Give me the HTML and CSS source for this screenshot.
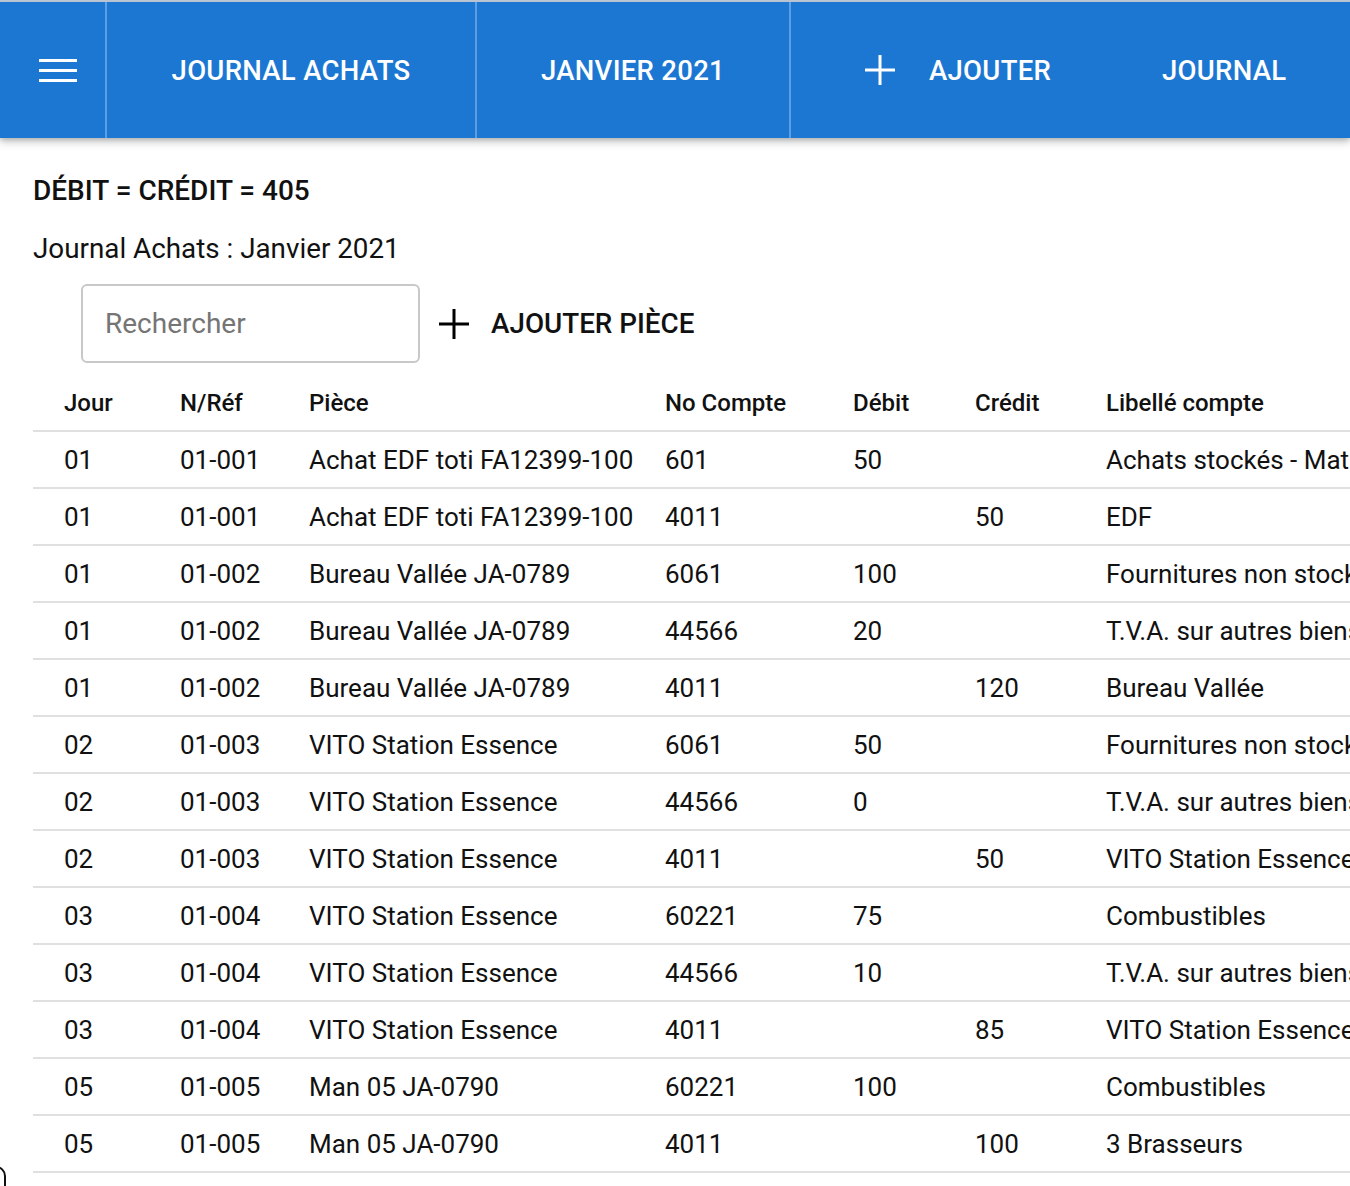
FILE: index.html
```html
<!DOCTYPE html>
<html lang="fr">
<head>
<meta charset="utf-8">
<title>Journal Achats</title>
<link rel="stylesheet" href="styles.css">
</head>
<body>
<header class="appbar">
  <div class="seg seg-menu">
    <svg class="menu-icon" width="38" height="25" viewBox="0 0 38 25"><rect x="0" y="1" width="38" height="3" fill="#fff"/><rect x="0" y="11" width="38" height="3" fill="#fff"/><rect x="0" y="21" width="38" height="3" fill="#fff"/></svg>
  </div>
  <div class="seg seg-journal">JOURNAL ACHATS</div>
  <div class="seg seg-month">JANVIER 2021</div>
  <div class="seg seg-add">
    <svg class="plus" width="30" height="30" viewBox="0 0 30 30"><rect x="0" y="13.5" width="30" height="3" fill="#fff"/><rect x="13.5" y="0" width="3" height="30" fill="#fff"/></svg>
    <span>AJOUTER</span>
  </div>
  <div class="seg seg-jour">JOURNAL</div>
</header>

<main class="content">
  <h1 class="total">DÉBIT = CRÉDIT = 405</h1>
  <p class="subtitle">Journal Achats : Janvier 2021</p>
  <div class="toolbar">
    <div class="search"><span class="placeholder">Rechercher</span></div>
    <div class="add-piece">
      <svg class="plus" width="30" height="30" viewBox="0 0 30 30"><rect x="0" y="13.5" width="30" height="3" fill="#000"/><rect x="13.5" y="0" width="3" height="30" fill="#000"/></svg>
      <span>AJOUTER PIÈCE</span>
    </div>
  </div>

  <table class="grid">
    <thead>
      <tr><th class="c1">Jour</th><th class="c2">N/Réf</th><th class="c3">Pièce</th><th class="c4">No Compte</th><th class="c5">Débit</th><th class="c6">Crédit</th><th class="c7">Libellé compte</th></tr>
    </thead>
    <tbody>
      <tr><td>01</td><td>01-001</td><td>Achat EDF toti FA12399-100</td><td>601</td><td>50</td><td></td><td>Achats stockés - Matières premières</td></tr>
      <tr><td>01</td><td>01-001</td><td>Achat EDF toti FA12399-100</td><td>4011</td><td></td><td>50</td><td>EDF</td></tr>
      <tr><td>01</td><td>01-002</td><td>Bureau Vallée JA-0789</td><td>6061</td><td>100</td><td></td><td>Fournitures non stockables</td></tr>
      <tr><td>01</td><td>01-002</td><td>Bureau Vallée JA-0789</td><td>44566</td><td>20</td><td></td><td>T.V.A. sur autres biens et services</td></tr>
      <tr><td>01</td><td>01-002</td><td>Bureau Vallée JA-0789</td><td>4011</td><td></td><td>120</td><td>Bureau Vallée</td></tr>
      <tr><td>02</td><td>01-003</td><td>VITO Station Essence</td><td>6061</td><td>50</td><td></td><td>Fournitures non stockables</td></tr>
      <tr><td>02</td><td>01-003</td><td>VITO Station Essence</td><td>44566</td><td>0</td><td></td><td>T.V.A. sur autres biens et services</td></tr>
      <tr><td>02</td><td>01-003</td><td>VITO Station Essence</td><td>4011</td><td></td><td>50</td><td>VITO Station Essence</td></tr>
      <tr><td>03</td><td>01-004</td><td>VITO Station Essence</td><td>60221</td><td>75</td><td></td><td>Combustibles</td></tr>
      <tr><td>03</td><td>01-004</td><td>VITO Station Essence</td><td>44566</td><td>10</td><td></td><td>T.V.A. sur autres biens et services</td></tr>
      <tr><td>03</td><td>01-004</td><td>VITO Station Essence</td><td>4011</td><td></td><td>85</td><td>VITO Station Essence</td></tr>
      <tr><td>05</td><td>01-005</td><td>Man 05 JA-0790</td><td>60221</td><td>100</td><td></td><td>Combustibles</td></tr>
      <tr><td>05</td><td>01-005</td><td>Man 05 JA-0790</td><td>4011</td><td></td><td>100</td><td>3 Brasseurs</td></tr>
    </tbody>
  </table>
</main>
<div class="corner"></div>
</body>
</html>
```

FILE: styles.css
```css
* { box-sizing: border-box; }
html, body { margin: 0; padding: 0; }
body {
  width: 1350px;
  height: 1186px;
  overflow: hidden;
  background: #fff;
  font-family: Roboto, "Noto Sans", Arial, sans-serif;
  color: rgba(0,0,0,0.87);
  position: relative;
}

.appbar {
  display: flex;
  height: 138px;
  background: #1c77d3;
  border-top: 2px solid #b8c4d2;
  box-shadow: 0 4px 8px rgba(0,0,0,0.22), 0 2px 4px rgba(0,0,0,0.12);
  color: #fff;
  position: relative;
  z-index: 1;
}
.seg {
  display: flex;
  align-items: center;
  justify-content: center;
  font-size: 27.5px;
  font-weight: 500;
  letter-spacing: 0.3px;
}
.seg-menu { width: 107px; border-right: 2px solid #5d9de3; justify-content: flex-start; padding-left: 39px; }
.seg-journal { width: 370px; border-right: 2px solid #5d9de3; }
.seg-month { width: 314px; border-right: 2px solid #5d9de3; }
.seg-add { width: 320px; gap: 34px; justify-content: flex-start; padding-left: 74px; }
.seg-jour { flex: 1; justify-content: flex-start; padding-left: 51px; }

.content { padding: 0 0 0 33px; }
.total {
  margin: 36px 0 0;
  font-size: 28px;
  font-weight: 500;
  line-height: 34px;
  color: #111;
}
.subtitle {
  margin: 24px 0 0;
  font-size: 27.8px;
  font-weight: 400;
  line-height: 34px;
  color: #111;
}
.toolbar {
  display: flex;
  align-items: center;
  gap: 19px;
  margin: 18px 0 0 48px;
}
.search {
  width: 339px;
  height: 79px;
  border: 2px solid #c8c8c8;
  border-radius: 6px;
  display: flex;
  align-items: center;
  padding-left: 22px;
}
.placeholder { font-size: 28px; color: #757575; }
.add-piece {
  display: flex;
  align-items: center;
  gap: 22px;
  font-size: 27.8px;
  font-weight: 500;
  color: #111;
}

.grid {
  margin-top: 12px;
  border-collapse: collapse;
  table-layout: fixed;
  width: 1420px;
  font-size: 26px;
  color: #111;
}
.grid th, .grid td {
  text-align: left;
  padding: 0 0 0 31px;
  height: 57px;
  border-bottom: 2px solid #e0e0e0;
  white-space: nowrap;
  overflow: hidden;
}
.grid th { font-weight: 500; font-size: 24px; height: 56px; }
.c1 { width: 116px; }
.c2 { width: 129px; }
.c3 { width: 356px; }
.c4 { width: 188px; }
.c5 { width: 122px; }
.c6 { width: 131px; }
.c7 { width: 378px; }

.corner {
  position: absolute;
  left: -14px;
  top: 1166px;
  width: 20px;
  height: 60px;
  border: 2px solid #111;
  border-radius: 12px;
}
```
